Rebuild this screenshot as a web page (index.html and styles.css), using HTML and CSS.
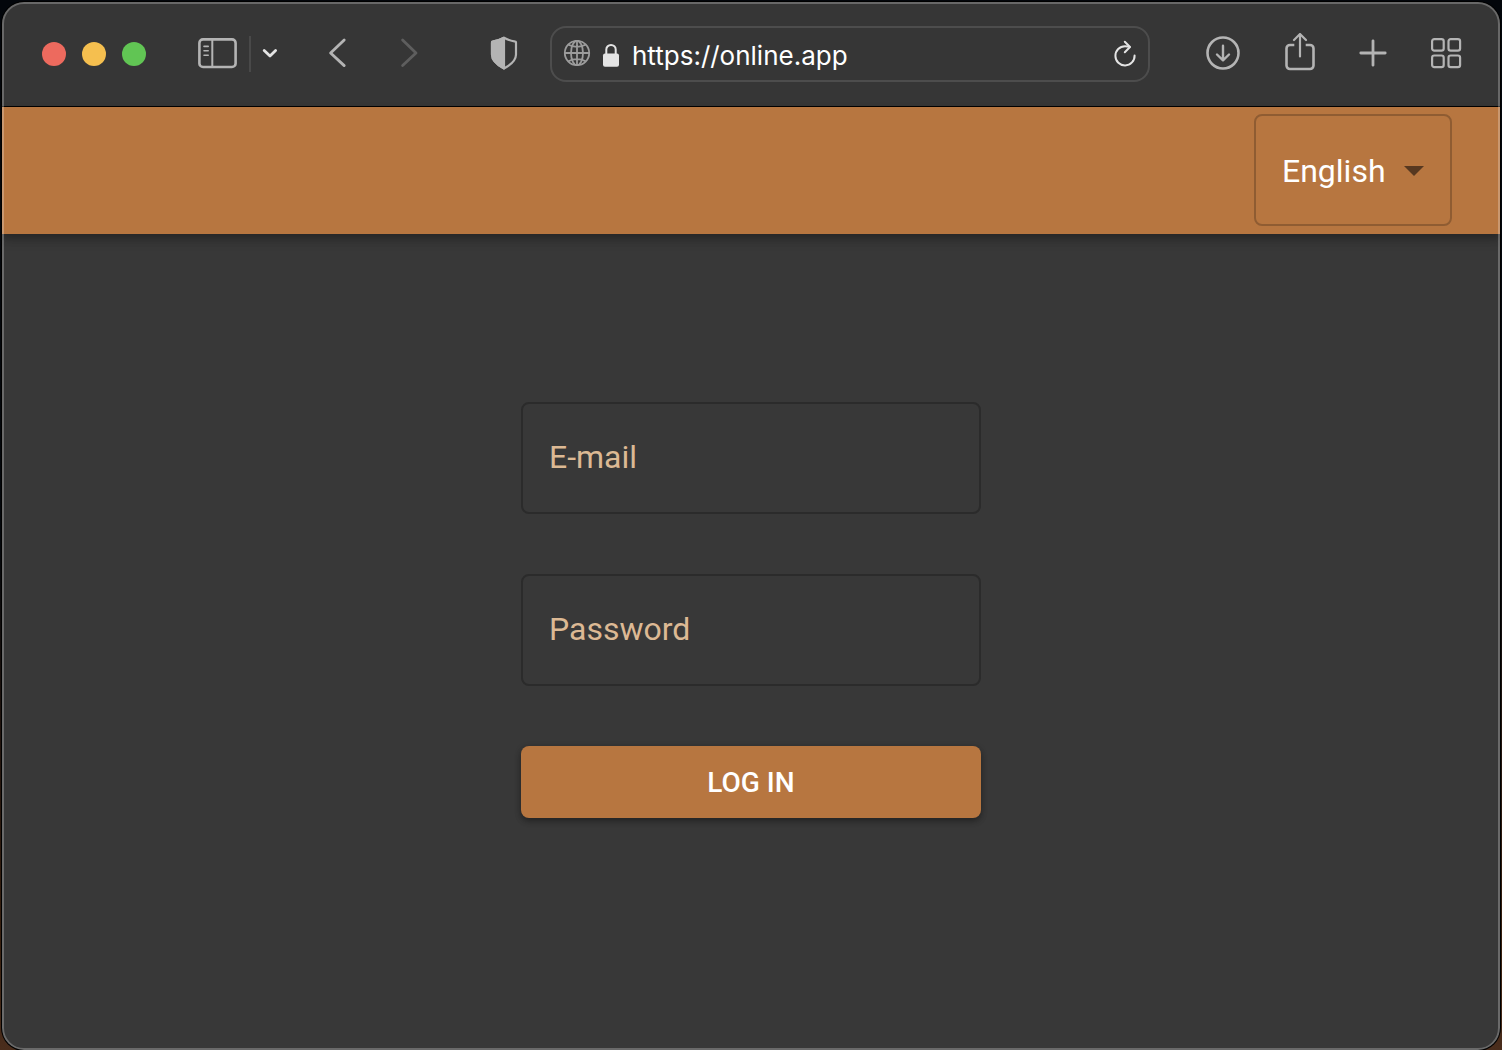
FILE: index.html
```html
<!DOCTYPE html>
<html lang="en">
<head>
<meta charset="utf-8">
<meta name="viewport" content="width=device-width, initial-scale=1">
<title>Log in</title>
<link rel="stylesheet" href="styles.css">
</head>
<body>
<div class="window">
  <header class="toolbar">
    <div class="lights">
      <button class="light light-close" type="button" aria-label="Close"></button>
      <button class="light light-minimize" type="button" aria-label="Minimize"></button>
      <button class="light light-zoom" type="button" aria-label="Zoom"></button>
    </div>
    <div class="sidebar-group">
      <button class="icon-button" type="button" aria-label="Show sidebar">
        <svg width="40" height="32" viewBox="0 0 40 32" fill="none" stroke="currentColor" stroke-linecap="round">
          <rect x="1.4" y="2.4" width="36.2" height="27.6" rx="3.6" stroke-width="2.6"/>
          <path d="M14.3 2.5v27.4" stroke-width="2" stroke-linecap="butt"/>
          <path d="M6 9.4h4.2M6 13.8h4.2M6 18.2h4.2" stroke-width="1.6"/>
        </svg>
      </button>
      <span class="divider"></span>
      <button class="icon-button bright" type="button" aria-label="Tab groups">
        <svg width="16" height="12" viewBox="0 0 16 12" fill="none" stroke="currentColor" stroke-width="2.8" stroke-linecap="round" stroke-linejoin="round"><path d="M2.2 3.5 8 9l5.6-5.5"/></svg>
      </button>
    </div>
    <div class="history">
      <button class="icon-button" type="button" aria-label="Back">
        <svg width="20" height="32" viewBox="0 0 20 32" fill="none" stroke="currentColor" stroke-width="2.8" stroke-linecap="round" stroke-linejoin="round"><path d="M16.2 3 2.6 16l13.6 12.6"/></svg>
      </button>
      <button class="icon-button dim" type="button" aria-label="Forward">
        <svg width="20" height="32" viewBox="0 0 20 32" fill="none" stroke="currentColor" stroke-width="2.8" stroke-linecap="round" stroke-linejoin="round"><path d="M2.6 3 16 16 2.6 28.6"/></svg>
      </button>
    </div>
    <button class="icon-button" type="button" aria-label="Privacy report">
      <svg width="30" height="36" viewBox="0 0 30 36" fill="none" stroke="currentColor" stroke-width="2.2" stroke-linejoin="round">
        <path d="M15 2.8c3.5 2 7.4 3.2 11.4 3.9.4 0 .6.4.6.8v12c0 5.700-5.200 10.400-12 14-6.800-3.600-12-8.300-12-14v-12c0-.4.2-.8.600-.8C7.600 6 11.500 4.800 15 2.800z"/>
        <path d="M15 2.800v30.700c-6.800-3.600-12-8.300-12-14v-12c0-.4.2-.8.600-.8C7.600 6 11.500 4.800 15 2.800z" fill="currentColor"/>
      </svg>
    </button>
    <div class="address">
      <svg class="globe" width="28" height="28" viewBox="0 0 28 28" fill="none" stroke="currentColor" stroke-width="1.800">
        <circle cx="14" cy="13" r="12.200"/>
        <ellipse cx="14" cy="13" rx="6" ry="12.200"/>
        <path d="M14 .8v24.400M1.800 13h24.400M5 4.600c5 3 13 3 18 0M5 21.400c5-3 13-3 18 0"/>
      </svg>
      <svg class="lock" width="18" height="26" viewBox="0 0 18 26">
        <path d="M4.300 13V8.600a4.700 4.700 0 0 1 9.400 0V13" fill="none" stroke="currentColor" stroke-width="2"/>
        <rect x="1" y="12.500" width="16" height="13.200" rx="2" fill="currentColor"/>
      </svg>
      <input class="url" type="text" aria-label="Address" value="https://online.app">
      <button class="icon-button bright" type="button" aria-label="Reload">
        <svg width="24" height="28" viewBox="0 0 24 28" fill="none" stroke="currentColor" stroke-width="2" stroke-linecap="round" stroke-linejoin="round">
          <path d="M21.600 16.500A9.600 9.600 0 1 1 12 7.200c1.600 0 3 .1 4.600.700"/>
          <path d="M11.800 2.800 17 8l-5.200 5.300"/>
        </svg>
      </button>
    </div>
    <div class="actions">
      <button class="icon-button" type="button" aria-label="Downloads">
        <svg width="36" height="36" viewBox="0 0 36 36" fill="none" stroke="currentColor" stroke-width="2.600" stroke-linecap="round" stroke-linejoin="round">
          <circle cx="18" cy="18" r="15.500"/><path d="M18 10.800v14M12 19.500l6 5.800 6-5.800" stroke-width="2.400"/>
        </svg>
      </button>
      <button class="icon-button" type="button" aria-label="Share">
        <svg width="32" height="40" viewBox="0 0 32 40" fill="none" stroke="currentColor" stroke-width="2.600" stroke-linecap="round" stroke-linejoin="round">
          <path d="M10.300 12H6a3.500 3.500 0 0 0-3.500 3.500v17A3.500 3.500 0 0 0 6 36h20a3.500 3.500 0 0 0 3.500-3.500v-17A3.500 3.500 0 0 0 26 12h-4.300" stroke-linecap="butt"/>
          <path d="M16 23.500V1.500M10 7l6-6 6 6" stroke-width="2.200"/>
        </svg>
      </button>
      <button class="icon-button" type="button" aria-label="New tab">
        <svg width="28" height="28" viewBox="0 0 28 28" stroke="currentColor" stroke-width="2.800" stroke-linecap="round"><path d="M14 1.800v24.400M1.800 14h24.400"/></svg>
      </button>
      <button class="icon-button" type="button" aria-label="Tab overview">
        <svg width="32" height="32" viewBox="0 0 32 32" fill="none" stroke="currentColor" stroke-width="2.200">
          <rect x="2.100" y="2.100" width="11.600" height="11.600" rx="2.200"/><rect x="18.500" y="2.100" width="11.600" height="11.600" rx="2.200"/>
          <rect x="2.100" y="18.500" width="11.600" height="11.600" rx="2.200"/><rect x="18.500" y="18.500" width="11.600" height="11.600" rx="2.200"/>
        </svg>
      </button>
    </div>
  </header>
  <nav class="app-bar" aria-label="Language">
    <div class="language">
      <select class="language-select" aria-label="Language"><option>English</option></select>
      <svg class="caret" width="20" height="10" viewBox="0 0 20 10" aria-hidden="true"><path d="M0 0h20L10 10z" fill="currentColor"/></svg>
    </div>
  </nav>
  <main class="page">
    <form class="login">
      <div class="field">
        <label class="field-label" for="email">E-mail</label>
        <input class="field-input" id="email" type="email">
      </div>
      <div class="field">
        <label class="field-label" for="password">Password</label>
        <input class="field-input" id="password" type="password">
      </div>
      <button class="submit" type="submit">LOG IN</button>
    </form>
  </main>
</div>
</body>
</html>
```
FILE: styles.css
```css
* {
  box-sizing: border-box;
}

body {
  margin: 0;
  padding: 2px 2px 0;
  min-height: 100vh;
  display: flex;
  background: linear-gradient(#03060b 0%, #05080c 52%, #21140e 70%, #38200f 90%, #4a2d1c 100%);
  font-family: Roboto, sans-serif;
}

button,
input,
select {
  margin: 0;
  padding: 0;
  border: 0;
  background: none;
  color: inherit;
  font: inherit;
}

.window {
  position: relative;
  flex: 1;
  min-width: 0;
  display: flex;
  flex-direction: column;
  border-radius: 22px;
  overflow: hidden;
  background: #383838;
  box-shadow: 0 0 0 1px #000;
}

/* Light rim drawn over the window's contents */
.window::after {
  content: "";
  position: absolute;
  inset: 0;
  border: 2px solid rgba(255, 255, 255, 0.25);
  border-radius: 22px;
  pointer-events: none;
}

.toolbar {
  display: flex;
  align-items: center;
  height: 105px;
  padding: 0 38px 0 40px;
  border-bottom: 1px solid #000;
  background: #363636;
  color: #b4b4b4;
}

.icon-button {
  display: flex;
  flex: none;
  padding-bottom: 2px;
}

.icon-button svg {
  display: block;
}

.bright {
  color: #e4e4e4;
}

.dim {
  color: #5e5e5e;
}

.lights {
  display: flex;
  gap: 16px;
  margin-right: 52px;
}

.light {
  width: 24px;
  height: 24px;
  border-radius: 50%;
}

.light-close {
  background: #ed6a5e;
}

.light-minimize {
  background: #f5bf4f;
}

.light-zoom {
  background: #61c554;
}

.sidebar-group {
  display: flex;
  align-items: center;
  gap: 11px;
  margin-right: 50px;
}

.divider {
  width: 2px;
  height: 36px;
  background: #494949;
}

.history {
  display: flex;
  gap: 52px;
  margin-right: 69px;
}

.address {
  flex: 1;
  min-width: 0;
  display: flex;
  align-items: center;
  height: 56px;
  margin: 0 55px 0 31px;
  padding: 0 11px;
  border: 2px solid #4d4d4d;
  border-radius: 16px;
}

.globe {
  flex: none;
  margin-right: 11px;
  color: #9c9c9c;
}

.lock {
  flex: none;
  margin-right: 12px;
  color: #e4e4e4;
}

.url {
  flex: 1;
  min-width: 0;
  height: 40px;
  padding-top: 2px;
  color: #fff;
  font-family: Inter, sans-serif;
  font-size: 26px;
}

.actions {
  display: flex;
  align-items: center;
  gap: 43px;
}

.app-bar {
  display: flex;
  justify-content: flex-end;
  padding: 7px 48px 8px;
  background: #b77640;
  box-shadow: 0 4px 8px rgba(0, 0, 0, 0.25), 0 8px 10px rgba(0, 0, 0, 0.1);
}

.language {
  position: relative;
  width: 198px;
  color: #fff;
  font-size: 32px;
}

.language-select {
  width: 100%;
  height: 112px;
  padding: 2px 60px 0 26px;
  border: 2px solid #8f5c32;
  border-radius: 8px;
  appearance: none;
}

.caret {
  position: absolute;
  top: 52px;
  right: 28px;
  color: #573820;
  pointer-events: none;
}

.page {
  flex: 1;
  display: flex;
  justify-content: center;
  padding: 168px 24px 60px;
}

.login {
  display: flex;
  flex-direction: column;
  gap: 60px;
  width: 460px;
}

.field {
  display: grid;
  height: 112px;
}

.field-label,
.field-input {
  grid-area: 1 / 1;
}

.field-label {
  align-self: center;
  padding: 0 0 2px 28px;
  color: #dcb994;
  font-size: 32px;
  line-height: 40px;
}

.field-input {
  width: 100%;
  padding: 0 26px;
  border: 2px solid #2b2b2b;
  border-radius: 8px;
  font-size: 32px;
}

.submit {
  height: 72px;
  border-radius: 8px;
  background: #b77640;
  box-shadow: 0 2px 6px rgba(0, 0, 0, 0.3), 0 4px 6px rgba(0, 0, 0, 0.15);
  color: #fff;
  font-size: 28px;
  font-weight: 500;
}
```
